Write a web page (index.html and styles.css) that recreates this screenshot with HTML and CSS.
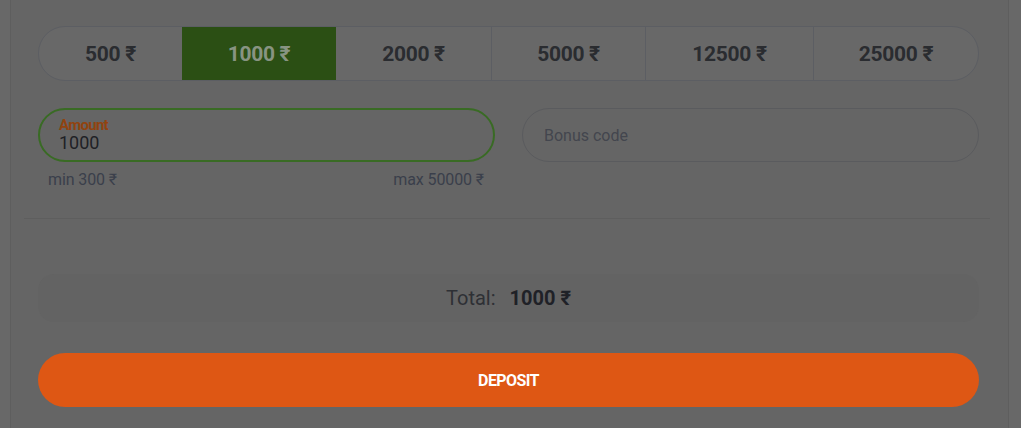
FILE: index.html
```html
<!DOCTYPE html>
<html>
<head>
<meta charset="utf-8">
<link rel="stylesheet" href="styles.css">
</head>
<body>
<div class="panel">
  <div class="presets">
    <div class="preset">500 ₹</div>
    <div class="preset active">1000 ₹</div>
    <div class="preset">2000 ₹</div>
    <div class="preset">5000 ₹</div>
    <div class="preset">12500 ₹</div>
    <div class="preset">25000 ₹</div>
  </div>
  <div class="fields">
    <div class="field-col">
      <div class="input amount">
        <span class="label">Amount</span>
        <span class="value">1000</span>
      </div>
      <div class="limits"><span>min 300 ₹</span><span>max 50000 ₹</span></div>
    </div>
    <div class="field-col">
      <div class="input bonus"><span class="placeholder">Bonus code</span></div>
    </div>
  </div>
  <div class="divider"></div>
  <div class="total"><span class="total-label">Total:</span><span class="total-value">1000 ₹</span></div>
  <div class="deposit">DEPOSIT</div>
</div>
</body>
</html>
```
FILE: styles.css
```css
html, body {
  margin: 0;
  padding: 0;
  background: #686868;
  font-family: Roboto, "DejaVu Sans", sans-serif;
}
.panel {
  margin-left: 10px;
  width: 999px;
  height: 428px;
  padding: 26px 29px 0 27px;
  box-sizing: border-box;
  background: #656565;
  border-left: 1px solid #5e5e5e;
  border-right: 1px solid #5e5e5e;
}
.presets {
  display: grid;
  grid-template-columns: 143px 154px 155px 154px 168px 1fr;
  height: 53px;
  border: 1px solid #5c5e63;
  border-radius: 27px;
  overflow: hidden;
  background: #686868;
}
.preset {
  display: flex;
  align-items: center;
  justify-content: center;
  font-size: 21px;
  font-weight: 700;
  letter-spacing: -0.3px;
  color: #2a2c30;
  border-left: 1px solid #5c5e63;
}
.preset:first-child { border-left: none; }
.preset.active {
  background: #2b4f14;
  color: #889482;
  border-left: none;
}
.preset.active + .preset { border-left: none; }
.fields {
  display: flex;
  gap: 27px;
  margin-top: 27px;
}
.field-col {
  flex: 1;
}
.input {
  height: 54px;
  box-sizing: border-box;
  border-radius: 27px;
  display: flex;
  flex-direction: column;
  justify-content: center;
}
.amount {
  border: 2px solid #396b24;
  padding-left: 19px;
}
.label {
  font-size: 15px;
  font-weight: 700;
  color: #91430f;
  line-height: 15px;
  letter-spacing: -0.7px;
}
.value {
  font-size: 18px;
  color: #202125;
  line-height: 19px;
}
.bonus {
  border: 1px solid #5a5b5e;
  padding-left: 21px;
}
.placeholder {
  font-size: 16px;
  color: #43464e;
}
.limits {
  display: flex;
  justify-content: space-between;
  padding: 8px 11px 0 10px;
  font-size: 16px;
  letter-spacing: -0.1px;
  color: #3a3f4b;
}
.divider {
  height: 1px;
  background: #5e5e5e;
  margin: 29px -11px 0 -14px;
}
.total {
  margin-top: 55px;
  height: 48px;
  border-radius: 16px;
  background: #636363;
  display: flex;
  align-items: center;
  justify-content: center;
  gap: 14px;
  font-size: 20px;
  color: #2c2e33;
}
.total-label { font-weight: 400; color: #2e3035; }
.total-value { font-weight: 700; color: #1f2127; }
.deposit {
  margin-top: 31px;
  height: 54px;
  border-radius: 27px;
  background: #de5714;
  color: #ffffff;
  font-weight: 700;
  font-size: 16px;
  letter-spacing: -0.6px;
  display: flex;
  align-items: center;
  justify-content: center;
}
```
